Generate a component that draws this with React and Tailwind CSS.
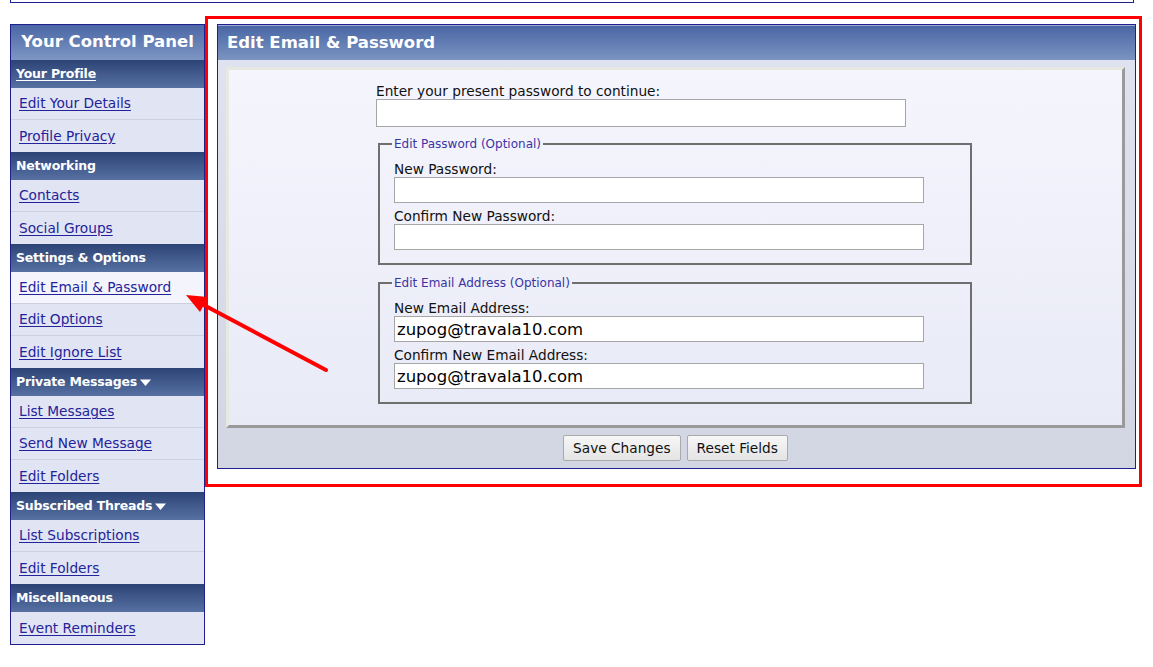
import React from "react";

const Section = ({ children, link, arrow }) => (
  <div className="h-[28px] flex items-center pl-[5px] bg-gradient-to-b from-[#2d4375] to-[#5771a3] text-white font-bold text-[12.5px] tracking-[-0.2px] leading-none">
    <span className={link ? "underline underline-offset-2" : ""}>{children}</span>
    {arrow && (
      <svg width="11" height="8" viewBox="0 0 11 8" className="ml-[3px] mt-[1px]">
        <polygon points="0,0.5 11,0.5 5.5,7" fill="#ffffff" />
      </svg>
    )}
  </div>
);

const Item = ({ children, active, last }) => (
  <div
    className={
      "h-[32px] flex items-center pl-[8px] text-[13.7px] " +
      (active ? "bg-[#f3f4fc] " : "bg-[#e1e4f2] ") +
      (last ? "" : "border-b border-[#cdd0de]")
    }
  >
    <a href="#" className="text-[#23239b] underline underline-offset-2">
      {children}
    </a>
  </div>
);

const Field = ({ label, value, first }) => (
  <div>
    <div className={"text-[13.7px] leading-[16px] text-[#111] " + (first ? "mt-[9px]" : "mt-[5px]")}>{label}</div>
    <div className="w-[530px] h-[26px] border border-[#a6a6a6] bg-white pl-[2px] pt-[3px] flex items-center text-[16.5px] text-black">
      {value}
    </div>
  </div>
);

export default function App() {
  return (
    <div className="relative w-[1153px] h-[667px] bg-white overflow-hidden font-['DejaVu_Sans',sans-serif]">
      <div className="ml-[10px] w-[1124px] h-[3px] border-x border-b border-[#1f1f8f]" />
      <div className="flex items-start gap-[12px] ml-[10px] mt-[21px]">
        {/* Sidebar */}
        <div className="w-[195px] border border-[#1f1f8f]">
          <div className="h-[35px] flex items-center justify-center bg-gradient-to-b from-[#4a67a5] to-[#7f96c3] text-white font-bold text-[16.5px]">
            Your Control Panel
          </div>
          <Section link>Your Profile</Section>
          <Item>Edit Your Details</Item>
          <Item last>Profile Privacy</Item>
          <Section>Networking</Section>
          <Item>Contacts</Item>
          <Item last>Social Groups</Item>
          <Section>Settings &amp; Options</Section>
          <Item active>Edit Email &amp; Password</Item>
          <Item>Edit Options</Item>
          <Item last>Edit Ignore List</Item>
          <Section arrow>Private Messages</Section>
          <Item>List Messages</Item>
          <Item>Send New Message</Item>
          <Item last>Edit Folders</Item>
          <Section arrow>Subscribed Threads</Section>
          <Item>List Subscriptions</Item>
          <Item last>Edit Folders</Item>
          <Section>Miscellaneous</Section>
          <Item last>Event Reminders</Item>
        </div>

        {/* Main panel */}
        <div className="w-[919px] border border-[#1f1f8f]">
          <div className="h-[35px] flex items-center pl-[9px] border-t border-[#9aabd0] bg-gradient-to-b from-[#4a67a5] to-[#7c94c1] text-white font-bold text-[16.5px]">
            Edit Email &amp; Password
          </div>
          <div className="bg-gradient-to-b from-[#dfe3f0] to-[#d2d6e3] pt-[7px] pl-[8px] pr-[10px]">
            <div className="h-[361px] border-[3px] border-t-[#e8e8e3] border-l-[#e8e8e3] border-r-[#9a9a9a] border-b-[#9a9a9a] bg-gradient-to-b from-[#f5f5fd] to-[#e8eaf6]">
              <div className="w-[596px] ml-[147px] pt-[13px]">
                <div className="text-[13.7px] leading-[16px] text-[#111]">Enter your present password to continue:</div>
                <div className="w-[530px] h-[28px] border border-[#a6a6a6] bg-white" />
                <fieldset className="ml-[2px] mt-[9px] w-[594px] border-2 border-[#6f6f6f] pl-[14px] pb-[13px]">
                  <legend className="-ml-[2px] px-[2px] text-[12px] leading-[16px] text-[#3b33a3]">Edit Password (Optional)</legend>
                  <Field first label="New Password:" />
                  <Field label="Confirm New Password:" />
                </fieldset>
                <fieldset className="ml-[2px] mt-[10px] w-[594px] border-2 border-[#6f6f6f] pl-[14px] pb-[13px]">
                  <legend className="-ml-[2px] px-[2px] text-[12px] leading-[16px] text-[#3b33a3]">Edit Email Address (Optional)</legend>
                  <Field first label="New Email Address:" value="zupog@travala10.com" />
                  <Field label="Confirm New Email Address:" value="zupog@travala10.com" />
                </fieldset>
              </div>
            </div>
            <div className="h-[40px] flex items-center justify-center gap-[6px]">
              <button className="h-[26px] px-[9px] border border-[#a9a9a9] rounded-[2px] bg-gradient-to-b from-[#f7f7f7] to-[#e4e4e4] text-[13.7px] text-[#111] font-['DejaVu_Sans',sans-serif]">
                Save Changes
              </button>
              <button className="h-[26px] px-[9px] border border-[#a9a9a9] rounded-[2px] bg-gradient-to-b from-[#f7f7f7] to-[#e4e4e4] text-[13.7px] text-[#111] font-['DejaVu_Sans',sans-serif]">
                Reset Fields
              </button>
            </div>
          </div>
        </div>
      </div>

      {/* Annotation: red box */}
      <div className="absolute left-[205px] top-[16px] w-[937px] h-[471px] border-[3px] border-[#ff0000] pointer-events-none" />
      {/* Annotation: arrow */}
      <svg className="absolute left-0 top-0 pointer-events-none" width="1153" height="667">
        <line x1="326" y1="370" x2="200" y2="303" stroke="#ff0000" strokeWidth="4" strokeLinecap="round" />
        <polygon points="186,295 208,297 200,312" fill="#ff0000" />
      </svg>
    </div>
  );
}
